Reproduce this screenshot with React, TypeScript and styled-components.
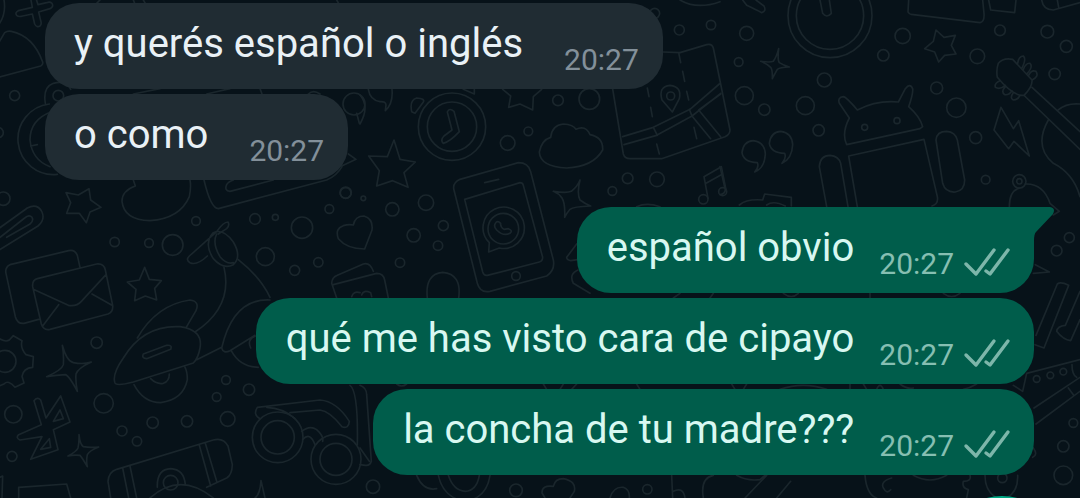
import React from "react";
import styled, { createGlobalStyle, css } from "styled-components";

const GlobalStyle = createGlobalStyle`
  *, *::before, *::after { box-sizing: border-box; }
  body {
    margin: 0;
    background: #071219;
    font-family: Roboto, "Liberation Sans", sans-serif;
  }
`;

const Chat = styled.main`
  position: relative;
  min-height: 100vh;
  overflow: hidden;
  padding: 3px 46px 23px 45px;
`;

const Wallpaper = styled.svg`
  position: absolute;
  inset: 0;
  width: 100%;
  height: 100%;
  fill: none;
  stroke: #1a262c;
  stroke-width: 5;
  stroke-linecap: round;
  stroke-linejoin: round;
`;

const Thread = styled.ol`
  position: relative;
  list-style: none;
  margin: 0;
  padding: 0;
  display: flex;
  flex-direction: column;
  gap: 27px;
`;

const Group = styled.li<{ $mine: boolean }>`
  display: flex;
  flex-direction: column;
  align-items: ${(p) => (p.$mine ? "flex-end" : "flex-start")};
  gap: 5px;
`;

const Bubble = styled.article<{ $mine: boolean; $tail: boolean }>`
  position: relative;
  display: flex;
  align-items: flex-end;
  min-height: 86px;
  border-radius: 34px;
  ${(p) =>
    p.$mine
      ? css`
          gap: 25px;
          padding: 17px 24px 15px 30px;
          background: #005d4b;
          color: #d8f8f1;
        `
      : css`
          gap: 41px;
          padding: 17px 24px 15px 29px;
          background: #202c33;
          color: #e9f1f6;
        `}
  ${(p) => p.$tail && "border-top-right-radius: 0;"}
`;

const Tail = styled.svg`
  position: absolute;
  top: 0;
  left: 100%;
  width: 20px;
  height: 34px;
  fill: #005d4b;
`;

const Message = styled.p`
  margin: 0;
  align-self: flex-start;
  font-size: 40px;
  line-height: 48px;
`;

const Meta = styled.div<{ $mine: boolean }>`
  display: flex;
  align-items: center;
  gap: 10px;
  height: 28px;
  color: ${(p) => (p.$mine ? "#86bfb2" : "#83909a")};
`;

const Time = styled.time`
  font-size: 30px;
  line-height: 28px;
`;

const Ticks = styled.svg`
  width: 46px;
  height: 30px;
  overflow: visible;
  fill: none;
  stroke: #7db6aa;
  stroke-width: 3.4;
  stroke-linecap: round;
  stroke-linejoin: round;
`;

const VoiceButton = styled.button`
  position: absolute;
  right: 18px;
  bottom: -118px;
  width: 120px;
  height: 120px;
  border: 0;
  border-radius: 50%;
  background: #00a884;
`;

type Tile = { x: number; y: number; circles: number[][]; paths: string[] };

// Doodles are drawn at three times their size, one block of wallpaper each.
const tiles: Tile[] = [
  {
    x: 0,
    y: 0,
    circles: [
      [44, 287, 15], [175, 287, 16], [-5, 398, 15], [10, 596, 20], [588, 663, 13],
      [765, 657, 16], [826, 652, 9], [906, 683, 32], [988, 627, 13], [1037, 579, 16],
      [344, 726, 14], [447, 729, 13], [518, 735, 31], [1062, 312, 33],
    ],
    paths: [
      "M92 -5L97 22L55 32Q44 38 50 46Q56 52 68 48L97 42L104 72Q110 84 120 78Q126 72 122 62L116 36L150 26Q162 20 156 10Q150 4 140 8L114 14L108 -5",
      "M10 -10Q22 40 -5 75",
      "M-5 130L14 98Q22 92 34 94Q100 108 128 186Q130 194 122 198L-5 232",
      "M136 310Q128 262 160 250Q200 240 212 268M148 312A104 104 0 0 0 172 523M152 336Q90 360 90 420Q96 480 150 500M92 438L112 434",
      "M267 566L272 600L303 622L270 636L259 668L238 640L200 640L212 608L198 578L235 585Z",
      "M-10 690L82 624Q112 608 126 636Q136 660 114 678L-10 755M-10 720L74 654Q88 642 96 652Q102 662 90 672L20 712",
      "M400 540L406 558Q366 572 366 604Q372 660 450 662Q540 656 568 590Q574 560 570 540",
      "M612 540Q632 625 655 626L980 540Q1010 528 1026 500M820 540L690 574Q672 572 680 554Q684 546 700 540",
      "M1045 462L1068 478L1025 498M1070 340L1078 370",
      "M400 282L480 266M620 282L690 266M780 266L786 282M925 282Q940 268 960 282",
      "M290 10L300 0M400 0L404 10M430 0L436 10M1010 0L1016 10",
    ],
  },
  {
    x: 360,
    y: 0,
    circles: [
      [276, 380, 101], [276, 380, 74], [594, 301, 16], [688, 297, 31], [505, 394, 13],
      [443, 429, 22], [803, 535, 16], [891, 538, 22], [757, 573, 13], [958, 90, 15],
      [1053, 75, 14], [884, 40, 15],
    ],
    paths: [
      "M262 336Q268 322 282 334L298 395Q270 425 250 430Q240 420 252 408L276 390Z",
      "M572 412Q576 375 610 372Q640 374 648 388Q676 374 690 404Q730 412 728 450Q700 500 620 504Q540 500 538 456Q545 420 572 412Z",
      "M25 268Q30 300 60 305Q78 304 78 315L76 332Q100 310 96 268",
      "M155 335Q148 300 170 294Q196 296 190 306Q180 320 165 340Z",
      "M428 268L452 288L446 322L480 312L518 330L520 290L545 268M310 268L343 282V268M0 285Q30 320 0 372",
      "M102 420L120 478L166 486L132 518L144 562L98 542L50 558L58 512L26 468L82 470Z",
      "M660 540Q650 580 660 600Q676 612 692 618Q640 620 630 628Q620 640 614 652Q616 610 606 594Q596 580 580 574Q620 580 634 574Q652 560 660 540Z",
      "M960 0Q1010 30 1080 5M830 620Q860 606 900 620",
    ],
  },
  {
    x: 560,
    y: 20,
    circles: [[332, 228, 12], [430, 538, 14], [488, 515, 12]],
    paths: [
      "M158 207L190 402Q194 416 210 416L305 416L495 350Q510 344 510 330L460 84Q456 70 440 74L360 98L310 96",
      "M188 350L280 322L390 268L478 192M192 374L290 346L396 288L482 220M482 222L416 270L482 350M396 288L452 356M280 322L292 346M388 268L396 288",
      "M262 204L267 230M272 262L277 290M290 372L298 402M356 98L362 128M368 154L374 184M380 214L386 240M402 322L410 356",
      "M337 276L306 240Q294 200 330 196Q366 200 358 236Z",
      "M444 535L432 470L484 440L498 510M438 490L488 462",
    ],
  },
  {
    x: 720,
    y: 0,
    circles: [
      [80, 100, 21], [56, 186, 13], [73, 287, 27], [133, 329, 17], [313, 240, 21],
      [256, 317, 27], [296, 391, 17], [490, 166, 17], [548, 108, 23], [772, 169, 22],
      [650, 264, 18], [709, 323, 29], [767, 413, 18], [840, 91, 16], [982, 95, 19],
      [1039, 139, 18], [1004, 222, 17], [797, 539, 13], [330, 47, 126], [330, 47, 101],
      [434, 382, 9], [531, 362, 9], [898, 544, 20], [898, 544, 8],
    ],
    paths: [
      "M648 90L672 112L706 106L694 136L708 162L674 166L656 186L644 156L614 146L640 124Z",
      "M176 146Q172 180 178 188Q190 196 208 201Q180 202 172 208Q164 222 157 236Q158 210 152 202Q142 192 122 184Q150 188 160 184Q170 170 176 146Z",
      "M300 0L308 40Q320 56 334 40L328 0",
      "M380 434Q364 400 388 354L358 310Q352 292 370 290Q380 292 412 330Q470 300 535 306L556 266Q570 248 578 266Q580 280 566 320Q600 350 608 380L600 386Z",
      "M412 620L386 468L612 418L652 590Q656 612 636 618M320 620L298 500Q300 466 330 466Q356 468 362 490L384 620",
      "M648 420Q650 394 680 394Q706 396 712 420L734 540Q734 572 706 576Q676 578 668 550Z",
      "M566 0L564 36Q568 44 580 44L780 68Q794 66 792 40L788 0M806 0L812 30L884 38L888 0M965 0Q970 30 1000 30L1080 8M1016 22L1012 0",
      "M68 0L80 16Q110 30 125 38Q140 34 132 18L108 0",
      "M843 322L822 390L866 446L882 424L928 468L896 362L880 386Z",
      "M835 190Q850 172 878 178L936 240Q938 260 912 286Q880 290 832 232Q828 210 835 190Z",
      "M936 262L1080 395M914 288L1080 448M1015 330Q1040 308 1080 312M985 360Q940 440 1000 490Q1060 520 1080 590",
      "M893 190Q896 168 910 168Q920 176 906 204M910 208Q918 188 930 190Q940 200 922 220M926 226Q934 208 948 214Q958 230 936 240",
      "M840 242Q822 250 826 262Q840 270 856 256M856 260Q842 276 854 284Q868 286 876 272M880 278Q868 294 880 300Q894 300 900 286",
      "M104 516Q118 500 112 488Q70 486 66 458Q70 424 100 422Q134 426 136 462Q134 504 104 516Z",
      "M186 490Q200 474 194 460Q152 458 148 430Q152 396 182 394Q216 398 218 434Q216 476 186 490Z",
      "M868 620Q868 570 900 564M916 552Q970 550 990 610L1018 634L1000 645",
      "M58 615Q80 596 128 600L134 582L214 592V618M140 615Q160 600 196 618M0 500L16 570Q14 582 0 584",
    ],
  },
  {
    x: 0,
    y: 160,
    circles: [],
    paths: [
      "M240 322L232 286Q224 268 206 272L30 314Q14 322 18 340L46 470Q52 492 72 490L116 478",
      "M112 356L290 312Q312 310 316 330L338 436Q340 456 324 462L150 508Q130 512 124 492L98 380Q96 360 112 356ZM100 388L205 436Q230 440 244 424L318 344M176 434L128 498M276 402L336 436",
      "M434 322L448 358L484 362L464 385L470 420L436 408L404 422L408 388L382 366L418 360Z",
      "M622 288Q590 318 570 308Q556 300 568 288L650 215Q670 186 684 186Q690 196 680 206L655 222",
      "M640 218Q610 250 640 296Q670 330 700 314Q726 290 700 246Q670 204 640 218ZM650 222Q636 250 660 290Q680 314 700 308",
    ],
  },
  {
    x: 0,
    y: 248,
    circles: [
      [15, 340, 33], [290, 284, 17], [311, 466, 29], [40, 499, 26], [366, 549, 15],
      [411, 580, 14], [458, 524, 17], [561, 520, 17], [683, 513, 22], [650, 447, 13],
      [678, 396, 13], [747, 425, 17], [36, 625, 15], [796, 26, 27], [884, 67, 15],
      [955, 43, 14], [833, 568, 76], [833, 568, 50], [1008, 634, 75], [1008, 634, 48],
      [512, 704, 22],
    ],
    paths: [
      "M-5 270Q16 284 28 276L40 263L66 278Q60 300 78 320L100 326L98 358Q70 360 66 385L72 405L45 418Q25 394 12 408L-5 415",
      "M187 292Q200 340 220 344Q250 350 274 342Q234 360 228 378Q226 400 232 430Q208 384 196 380Q170 382 140 386Q186 366 190 350Q192 320 187 292Z",
      "M237 560Q240 590 250 596Q270 600 296 597Q268 608 262 620Q258 640 262 656Q246 628 240 622Q222 620 204 624Q230 610 234 600Q238 580 237 560Z",
      "M102 458Q112 445 122 456L138 510L182 444L210 522L160 545L174 605L92 634L126 566L60 576Q46 570 56 560L124 530ZM180 486L190 512L160 520ZM148 572L152 598L122 604Z",
      "M345 405Q335 380 370 330Q430 230 540 236Q610 246 600 300Q595 330 580 345Q500 370 400 402Q350 415 345 405ZM440 332Q424 330 430 318L500 292Q518 290 512 304Z",
      "M412 270Q470 170 570 156Q600 160 588 188L560 236M672 58Q700 176 585 252M714 34Q780 86 810 148",
      "M402 410Q430 464 482 464Q550 455 562 395Q562 370 555 358M452 392Q470 410 490 406Q508 400 508 378M590 335L665 298",
      "M810 156Q700 150 665 300Q670 318 690 308L765 262M695 310Q720 356 775 358M765 265Q740 275 752 300",
      "M780 512Q758 500 772 478L960 456Q1010 460 1048 520Q1046 544 1026 536Q990 490 960 486L870 494M800 478Q850 480 885 512M905 550Q930 530 950 545Q972 565 968 580M908 575Q930 550 945 590M1050 412Q1075 430 1072 590",
      "M332 750L324 700Q326 672 350 664L640 576Q670 568 684 594L697 650Q696 680 680 690L620 718M368 660L386 750M390 654L410 750M598 592L632 714M616 586L650 700",
      "M472 718Q470 664 512 662Q552 664 556 710M450 750Q540 670 640 750M56 750V718L200 708L212 750M-5 690L8 684L6 750M783 698Q780 740 765 750M783 698L795 750",
    ],
  },
  {
    x: 200,
    y: 170,
    circles: [
      [577, 118, 20], [678, 98, 23], [641, 196, 20], [730, 167, 15], [714, 227, 14],
      [600, 278, 14], [490, 85, 7], [437, 68, 17], [948, 318, 13], [910, 176, 46],
    ],
    paths: [
      "M460 165Q465 138 492 138Q520 146 516 180L494 237Q440 236 415 206Q404 176 430 167Q446 162 460 165Z",
      "M410 384L395 340Q396 322 412 316L490 282Q510 276 520 304M400 344L530 310Q550 310 554 330L565 384M455 380Q460 362 480 368M485 375Q490 358 512 368L515 380",
      "M682 384Q674 312 728 307Q786 312 776 384",
      "M762 60Q756 40 780 28L955 -22Q985 -22 992 5L1060 270Q1066 300 1040 318L870 364Q840 370 832 340ZM794 88L960 38Q968 38 970 46L1028 262Q1028 274 1018 276L862 316Q852 318 848 306ZM854 38L896 28",
      "M866 246L868 218A62 62 0 1 1 898 234Z",
      "M886 160Q880 170 890 180Q910 200 930 190Q940 182 925 176L912 178Q900 170 902 160Q892 150 886 160Z",
      "M1130 222L1100 262Q1100 270 1112 272L1138 268M1134 300Q1106 312 1120 340L1170 370",
    ],
  },
  {
    x: 360,
    y: 248,
    circles: [[39, 716, 20], [468, 727, 19], [862, 724, 14]],
    paths: [
      "M235 682Q250 750 316 760Q380 750 390 682M265 682Q280 728 316 730Q350 728 358 682M170 682Q190 730 230 722",
      "M555 750L546 735Q545 710 580 715Q585 692 610 692Q650 700 643 730L630 750",
      "M750 750Q760 715 790 718Q810 725 808 750M935 682L938 750M940 730Q970 715 975 750M1030 750Q1020 690 1060 682",
      "M0 412Q20 420 20 440L34 640Q30 654 16 652L0 650M0 600L28 640",
      "M110 408Q125 420 140 408M550 408L560 424M600 424L610 408M635 424L650 408M830 408L840 424M940 150L960 136M1050 150L1060 136",
    ],
  },
  {
    x: 720,
    y: 248,
    circles: [
      [1010, 8, 16], [950, 393, 10], [991, 382, 10], [1030, 371, 10], [1060, 525, 13],
      [1030, 595, 17], [1030, 682, 28], [847, 690, 14], [1048, -31, 15],
    ],
    paths: [
      "M946 50L988 72L940 76M948 262L1012 108Q1022 100 1046 112L972 300L945 290M1080 130L1036 232Q1012 234 1010 250Q1030 276 1052 278L1080 215",
      "M880 412L908 430L920 376L1080 335M942 480L1080 388M948 528L1080 430M1045 420L1060 440M1056 350Q1056 380 1070 388M940 600Q955 620 938 628",
      "M50 682Q80 700 120 695L135 682M75 750L140 682M170 750L212 700M435 682Q440 740 470 750M515 690Q480 700 490 720Q500 740 512 725M580 682Q630 710 680 682M750 682Q755 700 730 700Q725 720 745 725L740 750M795 682Q795 730 830 750M893 682Q895 730 860 750",
      "M35 408L45 424M70 424L80 408M180 424Q250 400 320 424M390 408V424M430 408L440 424M470 424Q480 400 490 424M540 408Q560 424 580 420M730 424Q750 420 770 408M190 136Q215 155 235 136M450 150V136M670 136Q695 155 720 136",
    ],
  },
];

type Entry = { text: string; time: string };

const conversation: { mine: boolean; entries: Entry[] }[] = [
  {
    mine: false,
    entries: [
      { text: "y querés español o inglés", time: "20:27" },
      { text: "o como", time: "20:27" },
    ],
  },
  {
    mine: true,
    entries: [
      { text: "español obvio", time: "20:27" },
      { text: "qué me has visto cara de cipayo", time: "20:27" },
      { text: "la concha de tu madre???", time: "20:27" },
    ],
  },
];

function Doodles() {
  return (
    <Wallpaper viewBox="0 0 1080 498" preserveAspectRatio="xMidYMid slice" aria-hidden="true">
      {tiles.map((t, i) => (
        <g key={i} transform={`translate(${t.x} ${t.y}) scale(0.33333)`}>
          {t.circles.map(([cx, cy, r], j) => (
            <circle key={j} cx={cx} cy={cy} r={r} />
          ))}
          <path d={t.paths.join("")} />
        </g>
      ))}
    </Wallpaper>
  );
}

export default function App() {
  return (
    <>
      <GlobalStyle />
      <Chat>
        <Doodles />
        <Thread>
          {conversation.map(({ mine, entries }, g) => (
            <Group key={g} $mine={mine}>
              {entries.map((entry, i) => {
                const tail = mine && i === 0;
                return (
                  <Bubble key={entry.text} $mine={mine} $tail={tail}>
                    {tail && (
                      <Tail viewBox="0 0 20 34" aria-hidden="true">
                        <path d="M-1 0H16Q22 1 19 7L2 25Q0 27 0 34H-1Z" />
                      </Tail>
                    )}
                    <Message>{entry.text}</Message>
                    <Meta $mine={mine}>
                      <Time>{entry.time}</Time>
                      {mine && (
                        <Ticks viewBox="0 0 46 30" role="img" aria-label="Entregado">
                          <path d="M2 15L12 25L30 1M22 22L26 25L44 1" />
                        </Ticks>
                      )}
                    </Meta>
                  </Bubble>
                );
              })}
            </Group>
          ))}
        </Thread>
        <VoiceButton type="button" aria-label="Mensaje de voz" />
      </Chat>
    </>
  );
}
